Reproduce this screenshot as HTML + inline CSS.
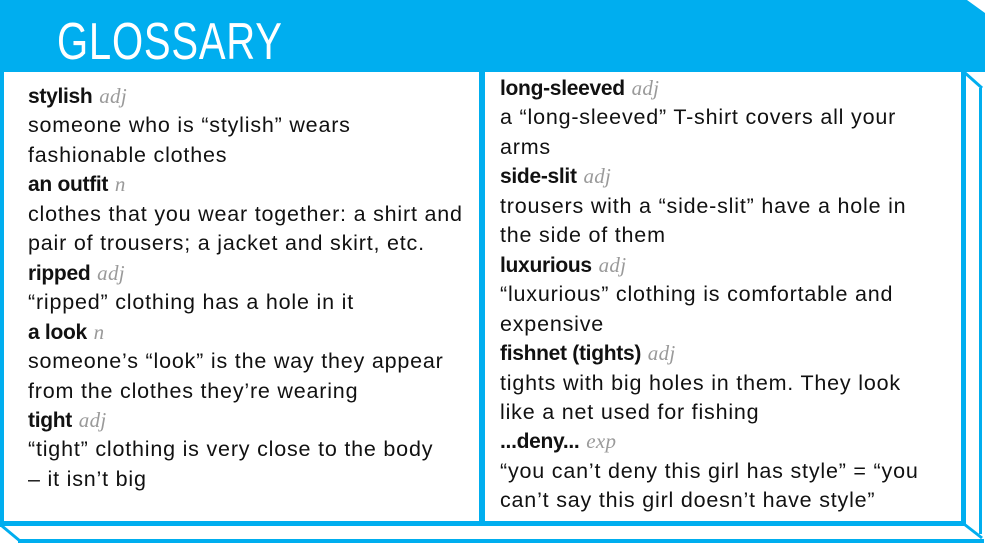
<!DOCTYPE html>
<html><head><meta charset="utf-8"><style>
html,body{margin:0;padding:0;}
body{width:985px;height:543px;position:relative;overflow:hidden;background:#fff;font-family:"Liberation Sans",sans-serif;}
.col{position:absolute;top:82px;white-space:nowrap;font-size:21.5px;line-height:29.45px;color:#111;letter-spacing:0.8px;}
.col b{font-weight:bold;font-size:21px;letter-spacing:-0.3px;}
.col i{font-family:"Liberation Serif",serif;color:#9a9a9a;font-size:21px;letter-spacing:0.3px;}
.h{position:absolute;left:57px;top:12px;color:#fff;font-family:"Liberation Sans",sans-serif;font-size:52px;letter-spacing:1px;line-height:60px;transform:scaleX(0.77);transform-origin:0 0;}
</style></head><body>
<svg width="985" height="543" style="position:absolute;left:0;top:0">
<polygon points="0,0 967,0 985,13 985,72 0,72" fill="#00aeef"/>
<rect x="0" y="0" width="4" height="527" fill="#00aeef"/>
<rect x="0" y="521" width="966" height="5" fill="#00aeef"/>
<rect x="479" y="70" width="6" height="455" fill="#00aeef"/>
<rect x="961" y="70" width="5" height="456" fill="#00aeef"/>
<rect x="979" y="88" width="3" height="446" fill="#00aeef"/>
<line x1="964" y1="72" x2="982" y2="88" stroke="#00aeef" stroke-width="3"/>
<line x1="964" y1="524" x2="982" y2="538" stroke="#00aeef" stroke-width="3"/>
<line x1="2" y1="526" x2="20" y2="541" stroke="#00aeef" stroke-width="3"/>
<rect x="18" y="539" width="966" height="4" fill="#00aeef"/>
</svg>
<div class="h">GLOSSARY</div>
<div class="col" style="left:28px;">
<b>stylish</b> <i>adj</i><br>someone who is “stylish” wears<br>fashionable clothes<br>
<b>an outfit</b> <i>n</i><br>clothes that you wear together: a shirt and<br>pair of trousers; a jacket and skirt, etc.<br>
<b>ripped</b> <i>adj</i><br>“ripped” clothing has a hole in it<br>
<b>a look</b> <i>n</i><br>someone’s “look” is the way they appear<br>from the clothes they’re wearing<br>
<b>tight</b> <i>adj</i><br>“tight” clothing is very close to the body<br>– it isn’t big
</div>
<div class="col" style="left:500px;top:74px;">
<b>long-sleeved</b> <i>adj</i><br>a “long-sleeved” T-shirt covers all your<br>arms<br>
<b>side-slit</b> <i>adj</i><br>trousers with a “side-slit” have a hole in<br>the side of them<br>
<b>luxurious</b> <i>adj</i><br>“luxurious” clothing is comfortable and<br>expensive<br>
<b>fishnet (tights)</b> <i>adj</i><br>tights with big holes in them. They look<br>like a net used for fishing<br>
<b>...deny...</b> <i>exp</i><br>“you can’t deny this girl has style” = “you<br>can’t say this girl doesn’t have style”
</div>
</body></html>
